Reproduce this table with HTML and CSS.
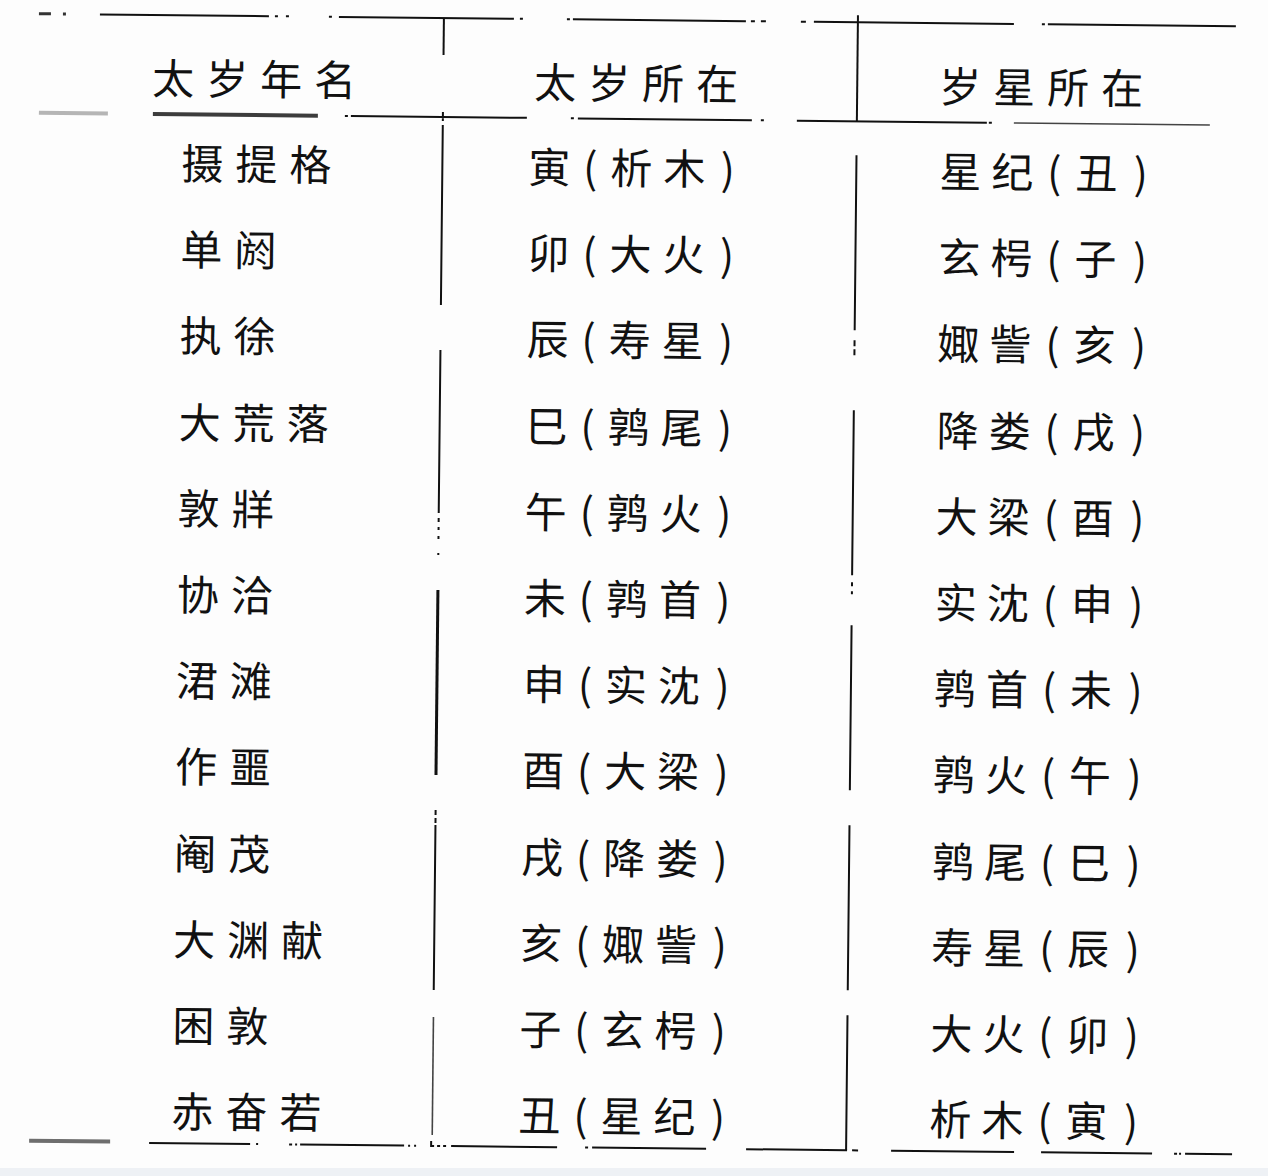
FILE: index.html
```html
<!DOCTYPE html>
<html lang="zh-CN">
<head>
<meta charset="utf-8">
<title>太岁年名表</title>
<link rel="stylesheet" href="styles.css">
</head>
<body>
<div class="page">
  <div class="sheet">
    <svg class="rule" width="1268" height="6" viewBox="0 0 1268 6">
      <path d="M33 3H45M57 3H60" stroke="#333" stroke-width="3" fill="none"/>
      <path d="M94 3H263M269 3H272M280 3H283M323 3H326M333 3H508M514 3H517M561 3H564M567 3H740M745 3H749M755 3H760M795 3H800M808 3H1008M1036 3H1039M1042 3H1230" stroke="#111" stroke-width="2" fill="none"/>
    </svg>

    <div class="grid head">
      <div class="h h1">太岁年名</div>
      <svg class="vdiv" width="2" height="94"><path d="M1 -3V34" stroke="#111" stroke-width="2"/></svg>
      <div class="h h2">太岁所在</div>
      <svg class="vdiv" width="2" height="94"><path d="M1 -10V96" stroke="#111" stroke-width="2"/></svg>
      <div class="h h3">岁星所在</div>
    </div>

    <svg class="rule" width="1268" height="4" viewBox="0 0 1268 4">
      <path d="M34 2H103" stroke="#b5b5b5" stroke-width="4" fill="none"/>
      <path d="M148 2H313" stroke="#3c3c3c" stroke-width="4" fill="none"/>
      <path d="M340 2H343M346 2H522M566 2H569M573 2H747M756 2H759M792 2H982M984 2H987M438 -3V6" stroke="#111" stroke-width="2" fill="none"/>
      <path d="M1009 2H1205" stroke="#444" stroke-width="1.6" fill="none"/>
    </svg>

    <div class="grid body">
      <div class="col c1">
        <div class="r">摄提格</div>
        <div class="r">单阏</div>
        <div class="r">执徐</div>
        <div class="r">大荒落</div>
        <div class="r">敦牂</div>
        <div class="r">协洽</div>
        <div class="r">涒滩</div>
        <div class="r">作噩</div>
        <div class="r">阉茂</div>
        <div class="r">大渊献</div>
        <div class="r">困敦</div>
        <div class="r">赤奋若</div>
      </div>
      <svg class="vdiv" width="2" height="1024">
        <path d="M1 6V186M1 231V394M1 399V403M1 408V411M1 417V420M1 434V436M1 691V696M1 699V704M1 706V871" stroke="#111" stroke-width="2" fill="none"/>
        <path d="M1 471V656" stroke="#111" stroke-width="3" fill="none"/>
        <path d="M1 898V1016" stroke="#444" stroke-width="1.6" fill="none"/>
      </svg>
      <div class="col c2">
        <div class="r"><span class="k">寅</span><span class="o">(</span><span class="k">析</span><span class="k">木</span><span class="c">)</span></div>
        <div class="r"><span class="k">卯</span><span class="o">(</span><span class="k">大</span><span class="k">火</span><span class="c">)</span></div>
        <div class="r"><span class="k">辰</span><span class="o">(</span><span class="k">寿</span><span class="k">星</span><span class="c">)</span></div>
        <div class="r"><span class="k">巳</span><span class="o">(</span><span class="k">鹑</span><span class="k">尾</span><span class="c">)</span></div>
        <div class="r"><span class="k">午</span><span class="o">(</span><span class="k">鹑</span><span class="k">火</span><span class="c">)</span></div>
        <div class="r"><span class="k">未</span><span class="o">(</span><span class="k">鹑</span><span class="k">首</span><span class="c">)</span></div>
        <div class="r"><span class="k">申</span><span class="o">(</span><span class="k">实</span><span class="k">沈</span><span class="c">)</span></div>
        <div class="r"><span class="k">酉</span><span class="o">(</span><span class="k">大</span><span class="k">梁</span><span class="c">)</span></div>
        <div class="r"><span class="k">戌</span><span class="o">(</span><span class="k">降</span><span class="k">娄</span><span class="c">)</span></div>
        <div class="r"><span class="k">亥</span><span class="o">(</span><span class="k">娵</span><span class="k">訾</span><span class="c">)</span></div>
        <div class="r"><span class="k">子</span><span class="o">(</span><span class="k">玄</span><span class="k">枵</span><span class="c">)</span></div>
        <div class="r"><span class="k">丑</span><span class="o">(</span><span class="k">星</span><span class="k">纪</span><span class="c">)</span></div>
      </div>
      <svg class="vdiv" width="2" height="1024">
        <path d="M1 32V207M1 217V223M1 226V232M1 287V452M1 459V463M1 468V471M1 502V667M1 702V867M1 892V1027" stroke="#111" stroke-width="2" fill="none"/>
      </svg>
      <div class="col c3">
        <div class="r"><span class="k">星</span><span class="k">纪</span><span class="o">(</span><span class="k">丑</span><span class="c">)</span></div>
        <div class="r"><span class="k">玄</span><span class="k">枵</span><span class="o">(</span><span class="k">子</span><span class="c">)</span></div>
        <div class="r"><span class="k">娵</span><span class="k">訾</span><span class="o">(</span><span class="k">亥</span><span class="c">)</span></div>
        <div class="r"><span class="k">降</span><span class="k">娄</span><span class="o">(</span><span class="k">戌</span><span class="c">)</span></div>
        <div class="r"><span class="k">大</span><span class="k">梁</span><span class="o">(</span><span class="k">酉</span><span class="c">)</span></div>
        <div class="r"><span class="k">实</span><span class="k">沈</span><span class="o">(</span><span class="k">申</span><span class="c">)</span></div>
        <div class="r"><span class="k">鹑</span><span class="k">首</span><span class="o">(</span><span class="k">未</span><span class="c">)</span></div>
        <div class="r"><span class="k">鹑</span><span class="k">火</span><span class="o">(</span><span class="k">午</span><span class="c">)</span></div>
        <div class="r"><span class="k">鹑</span><span class="k">尾</span><span class="o">(</span><span class="k">巳</span><span class="c">)</span></div>
        <div class="r"><span class="k">寿</span><span class="k">星</span><span class="o">(</span><span class="k">辰</span><span class="c">)</span></div>
        <div class="r"><span class="k">大</span><span class="k">火</span><span class="o">(</span><span class="k">卯</span><span class="c">)</span></div>
        <div class="r"><span class="k">析</span><span class="k">木</span><span class="o">(</span><span class="k">寅</span><span class="c">)</span></div>
      </div>
    </div>

    <svg class="rule" width="1268" height="6" viewBox="0 0 1268 6">
      <path d="M35 2H116" stroke="#6e6e6e" stroke-width="4" fill="none"/>
      <path d="M155 3H256M262 3H264M295 3H298M301 3H303M306 3H410M414 3H416M420 3H422M437 -2V3H440M443 3H446M449 3H452M457 3H563M591 3H594M598 3H712M752 3H853M858 3H864M897 3H1020M1047 3H1158M1180 3H1183M1185 3H1187M1191 3H1238" stroke="#111" stroke-width="2" fill="none"/>
    </svg>
  </div>
  <div class="strip"></div>
</div>
</body>
</html>
```

FILE: styles.css
```css
html, body {
  margin: 0;
  padding: 0;
  background: #fdfdfd;
}

body {
  font-family: "Noto Sans CJK SC", "Noto Sans CJK JP", sans-serif;
  color: #111;
}

.page {
  width: 1268px;
  height: 1176px;
  display: flex;
  flex-direction: column;
  overflow: hidden;
}

.sheet {
  height: 1168px;
  box-sizing: border-box;
  padding-top: 17px;
  transform: rotate(0.6deg);
  transform-origin: 634px 584px;
}

.strip {
  height: 8px;
  background: #eef1f5;
}

.rule,
.vdiv {
  display: block;
  overflow: visible;
}

.grid {
  display: grid;
  grid-template-columns: 437px 2px 412px 2px 1fr;
}

.head {
  height: 94px;
}

.body {
  height: 1024px;
}

.h {
  font-size: 42px;
  line-height: 42px;
  letter-spacing: 12px;
  padding-top: 37px;
  white-space: nowrap;
}

.h1 { padding-left: 147px; }
.h2 { padding-left: 90px; }
.h3 { padding-left: 81px; }

.col {
  padding-top: 2px;
}

.r {
  height: 86.2px;
  display: flex;
  align-items: center;
  font-size: 42px;
  line-height: 86.2px;
  white-space: nowrap;
}

.c1 { padding-left: 177px; }
.c1 .r { letter-spacing: 12px; }
.c2 { padding-left: 85px; }
.c3 { padding-left: 82px; }

.k {
  width: 42px;
  text-align: center;
}

.c2 .k + .k { margin-left: 11px; }
.c3 .k + .k { margin-left: 10px; }

.o,
.c {
  text-align: center;
}

.c2 .o { width: 40px; }
.c2 .c { width: 45px; }
.c3 .o { width: 42px; }
.c3 .c { width: 47px; }
```
